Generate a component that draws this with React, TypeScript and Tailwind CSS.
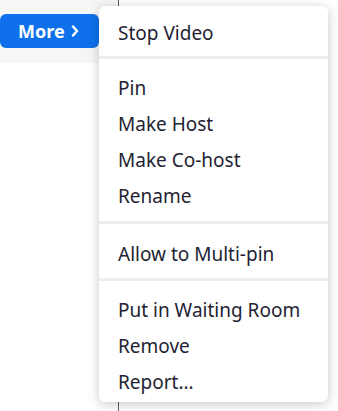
const groups: { items: string[]; pad: string }[] = [
  { items: ["Stop Video"], pad: "pt-[9px] pb-[5px]" },
  { items: ["Pin", "Make Host", "Make Co-host", "Rename"], pad: "pt-[11px] pb-[7px]" },
  { items: ["Allow to Multi-pin"], pad: "pt-[12px] pb-[6px]" },
  { items: ["Put in Waiting Room", "Remove", "Report..."], pad: "pt-[11px] pb-[2px]" },
];

const App = () => {
  return (
    <div
      className="relative w-[338px] h-[411px] bg-white overflow-hidden flex"
      style={{ fontFamily: '"Noto Sans", "Open Sans", sans-serif' }}
    >
      <div className="w-[119px] border-r border-[#5f5f5f]">
        <div className="h-[63px] bg-[#f6f6f6] pt-[14px]">
          <button className="flex items-center gap-[6px] h-[34px] w-[99px] rounded-[6px] bg-[#0e71eb] pl-[18px] text-white font-bold text-[18px]">
            More
            <svg width="8" height="12" viewBox="0 0 8 12" fill="none">
              <path d="M2 1.5 L6 6 L2 10.5" stroke="white" strokeWidth="2.4" strokeLinecap="round" strokeLinejoin="round" />
            </svg>
          </button>
        </div>
      </div>
      <div className="flex-1" />

      <div className="absolute left-[99px] top-[6px] w-[229px] rounded-[6px] bg-white shadow-[0_2px_12px_rgba(0,0,0,0.22)] text-[#232333] text-[19px]">
        {groups.map((g, i) => (
          <div
            key={i}
            className={(i > 0 ? "border-t-[3px] border-[#ededf0] " : "") + g.pad}
          >
            {g.items.map((item) => (
              <div key={item} className="h-9 flex items-center pl-[19px]">
                {item}
              </div>
            ))}
          </div>
        ))}
      </div>
    </div>
  );
};

export default App;
